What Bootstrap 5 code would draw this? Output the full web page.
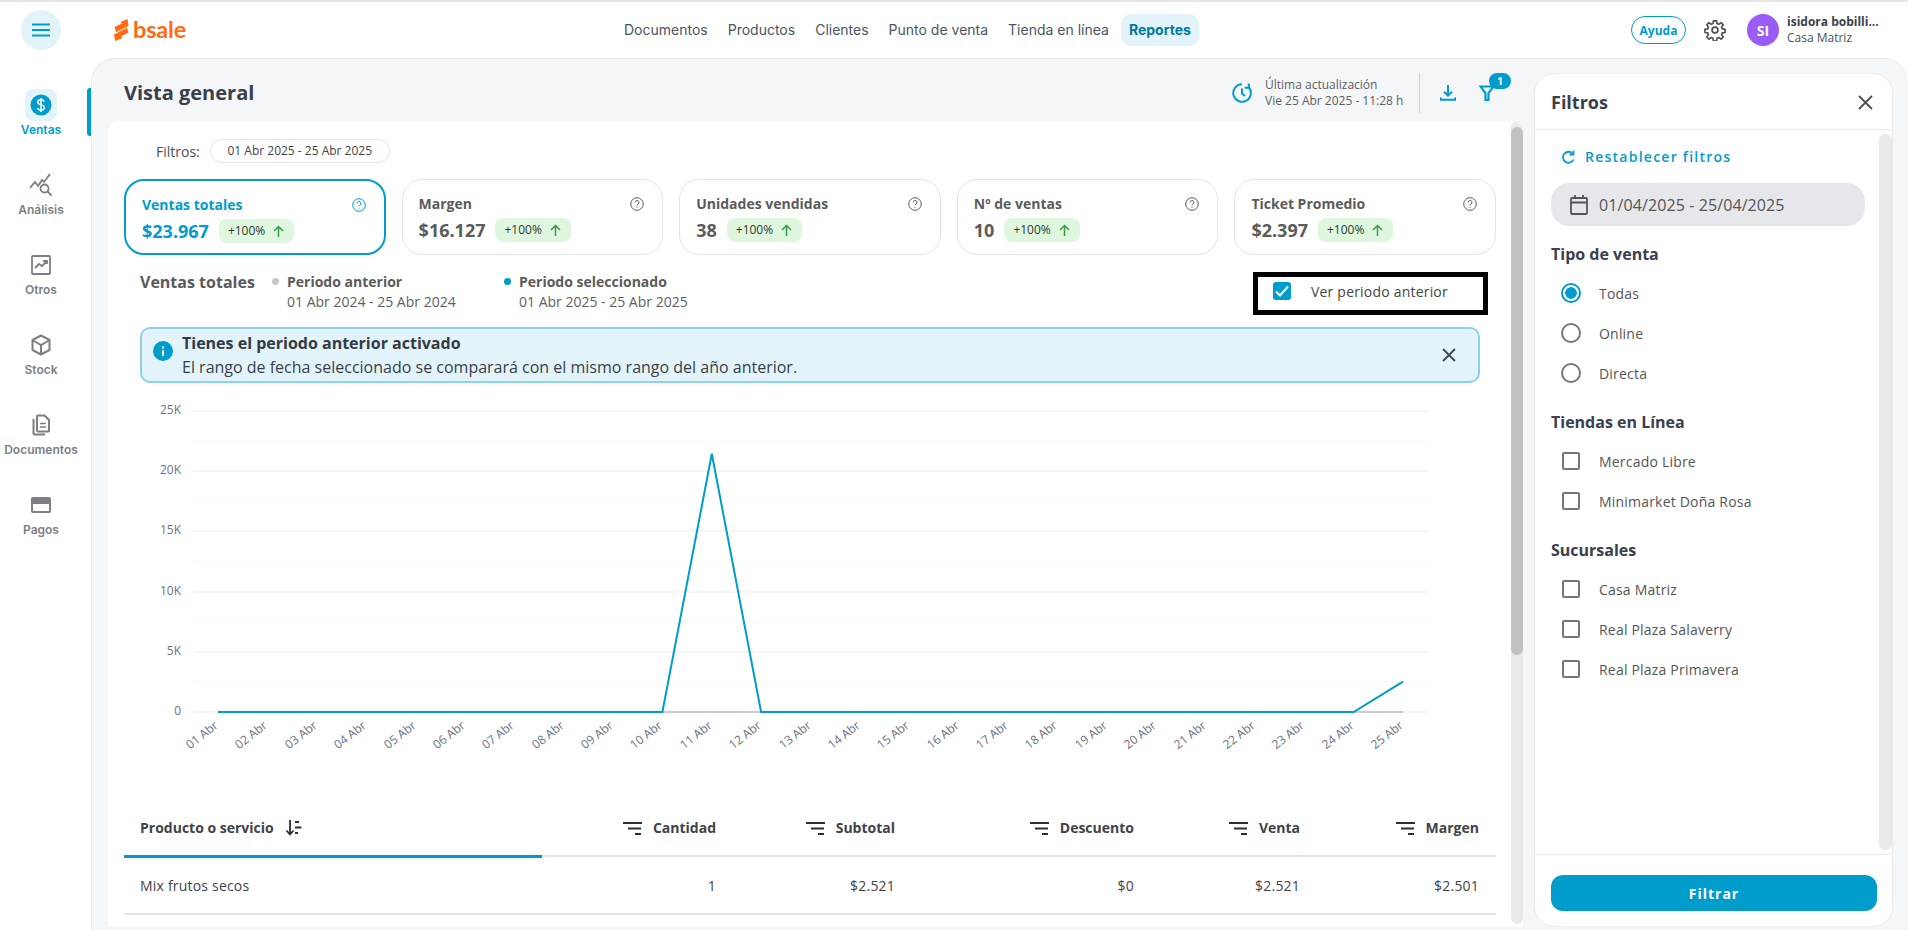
<!doctype html>
<html lang="es">
<head>
<meta charset="utf-8">
<title>Bsale - Vista general</title>
<link href="https://cdn.jsdelivr.net/npm/bootstrap@5.3.0/dist/css/bootstrap.min.css" rel="stylesheet">
<style>
html,body{height:100%;overflow:hidden}
body{font-family:"Open Sans","Liberation Sans",sans-serif;color:#4b4f57;background:#fff;font-size:14px}
.app-shell{height:930px;border-top:2px solid #e6e6e6;display:flex;flex-direction:column}
.top-bar{height:56px;flex:none;display:flex;align-items:center;position:relative}
.burger-wrap{width:91px;flex:none;display:flex;padding-left:21px}
.burger-btn{width:40px;height:40px;border-radius:50%;background:#e3f3fa;border:0;padding:0;display:flex;align-items:center;justify-content:center}
.logo-wrap{width:70px;margin-left:23px;display:flex;align-items:center;gap:4px;color:#ff6a13}
.logo-wrap svg{flex:none}
.logo-word{font-family:Lato,"Liberation Sans",sans-serif;font-weight:700;font-size:23.5px;line-height:1;letter-spacing:-.2px}
.main-nav{margin-left:430px;display:flex;align-items:center}
.main-nav a{font-family:Inter,"Liberation Sans",sans-serif;font-size:14px;color:#4b5563;text-decoration:none;padding:0 10px;line-height:32px}
.main-nav a.current{background:#e3f3fa;color:#00799f;font-weight:700;border-radius:10px;padding:0 8px;margin-left:2px}
.top-right{margin-left:auto;display:flex;align-items:center;padding-right:22px}
.help-pill{font-size:12px;font-weight:700;color:#009ccc;border:1.5px solid #009ccc;border-radius:14px;width:55px;height:28px;padding:0;line-height:25px;background:#fff}
.gear-icon{margin-left:18px}
.avatar-dot{width:32px;height:32px;border-radius:50%;background:#9b5cf6;color:#fff;font-weight:700;font-size:14px;display:flex;align-items:center;justify-content:center;margin-left:21px}
.user-box{margin-left:8px;width:99px;line-height:16px;font-size:12px}
.user-box b{display:block;color:#3a3f4a;font-weight:700;white-space:nowrap}
.work-area{flex:1;display:flex;min-height:0}
.side-rail{width:91px;flex:none;padding:27px 9px 0 0;position:relative}
.rail-item{height:80px;display:flex;flex-direction:column;align-items:center;font-family:Inter,"Liberation Sans",sans-serif;font-weight:600;font-size:12px;color:#7b7f86;text-decoration:none;padding-top:4px}
.rail-ico{width:32px;height:32px;display:flex;align-items:center;justify-content:center;border-radius:8px}
.rail-item.on{color:#009ccc}
.rail-item.on .rail-ico{background:#e3f3fa}
.rail-mark{position:absolute;right:0;top:30px;width:4px;height:48px;background:#009ccc;border-radius:3px 0 0 3px}
.main-panel{flex:1;min-width:0;background:#f5f6f8;border:1px solid #e9eaec;border-right:0;border-bottom:0;border-radius:24px 24px 0 0;display:flex;padding:0 15px 3px 16px;gap:11px}
.left-col{width:1415px;flex:none;display:flex;flex-direction:column;min-height:0}
.title-row{height:62px;flex:none;display:flex;align-items:center;padding:6px 0 0 16px}
.page-title{font-size:20px;font-weight:700;color:#3a3f4a;margin:0}
.update-box{margin-left:auto;display:flex;align-items:center;height:40px}
.update-box svg{flex:none}
.update-text{font-size:12px;line-height:16px;color:#5b5f66;margin-left:13px;width:141px;white-space:nowrap}
.v-rule{width:1px;height:40px;background:#cfd2d6;margin:0 20px 0 13px}
.filter-toggle{position:relative;margin-left:23px;margin-right:28px;display:flex}
.count-pill{position:absolute;top:-12px;left:10px;width:22px;height:16px;background:#009ccc;color:#fff;border-radius:8px;font-size:10px;font-weight:700;padding:0;line-height:16px}
.white-card{flex:1;min-height:0;background:#fff;border-radius:12px 12px 0 0;display:flex;overflow:hidden;position:relative}
.card-body-flow{width:1404px;flex:none;padding:18px 16px 0 16px}
.filter-line{height:24px;display:flex;align-items:center;margin-bottom:16px;padding-left:32px;gap:10px}
.date-chip{border:1px solid #e2e3e5;border-radius:12px;width:180px;height:24px;font-size:12px;line-height:22px;text-align:center;color:#3f434a;background:#fff}
.kpi-row{display:flex;gap:16px;margin-bottom:17px}
.kpi-tile{flex:0 0 calc((100% - 64px) / 5);height:76px;border:1px solid #e2e3e5;border-radius:20px;padding:14px 18px 0 16px;box-shadow:none}
.kpi-tile.sel{border:2px solid #009ccc;color:#009ccc;padding:14px 18px 0 16px}
.kpi-head{display:flex;justify-content:space-between;align-items:center;font-weight:700;font-size:14px;line-height:20px;color:#5b5b5b}
.kpi-tile.sel .kpi-head,.kpi-tile.sel .kpi-val{color:#009ccc}
.kpi-foot{display:flex;align-items:center;gap:10px;margin-top:4px}
.kpi-val{font-size:18px;font-weight:700;color:#5b5b5b;line-height:24px}
.up-tag{background:#dff6df;border-radius:8px;height:24px;font-size:12px;font-weight:400;color:#2e3a30;display:flex;align-items:center;gap:8px;padding:0 10px 0 9px}
.sales-head{display:flex;height:42px;margin-bottom:13px}
.sales-title{font-weight:700;font-size:16px;color:#5b5b5b;line-height:20px;margin-left:16px;width:130px;white-space:nowrap}
.legend-item{display:flex;font-size:14px;line-height:20px;color:#5b5f66}
.legend-item b{display:block;font-weight:700;color:#5b5b5b}
.legend-spot{width:7px;height:7px;border-radius:50%;margin:6px 8px 0 0;flex:none}
.legend-a{width:232px;margin-left:2px}
.prior-box{margin-left:auto;margin-right:8px;width:235px;height:43px;border:5px solid #000;display:flex;align-items:center;padding:0 0 5px 15px;gap:20px;font-size:14px;letter-spacing:.2px;color:#444}
.tick-box{width:18px;height:18px;background:#009ccc;border-radius:3px;display:flex;align-items:center;justify-content:center;flex:none}
.info-strip{height:56px;display:flex;align-items:center;background:#e3f3fa;border:2px solid #8bd3e9;border-radius:10px;padding:0 22px 0 11px;margin:0 16px 0 16px;color:#3a3f4a;gap:9px}
.info-strip .strip-text{flex:1;font-size:16px;line-height:24px}
.info-strip b{display:block;font-weight:700;color:#333a44}
.info-strip svg{flex:none}
.chart-box{height:416px;display:block;margin:0 0 0 -16px}
.chart-box text{font-family:"Open Sans","Liberation Sans",sans-serif;font-size:12px;fill:#6b7280}
.data-grid{width:100%;table-layout:fixed;margin:0;font-size:14px}
.data-grid th{height:57px;font-weight:700;color:#3f434a;vertical-align:bottom;padding:0 17px 17px 16px;border-bottom:2px solid #e2e3e5;text-align:right;white-space:nowrap}
.data-grid th.first{text-align:left;border-bottom:3px solid #009ccc}
.data-grid th svg{vertical-align:-3px}
.data-grid th svg.sort-lines{margin-right:7px}
.data-grid td{height:58px;color:#3f434a;vertical-align:middle;padding:0 17px 0 16px;border-bottom:2px solid #e2e3e5;text-align:right;letter-spacing:.2px}
.data-grid td.first{text-align:left}
.w-a{width:418px}.w-b{width:191px}.w-c{width:179px}.w-d{width:239px}.w-e{width:166px}.w-f{width:179px}
.scroll-track{position:absolute;right:0;top:0;bottom:3px;width:12px;background:#e9eaec;border-radius:6px}
.scroll-thumb{margin-top:6px;height:528px;background:#c1c1c1;border-radius:6px}
.filter-panel{width:359px;flex:none;margin-top:14px;background:#fff;border:1px solid #e9eaec;border-radius:20px;display:flex;flex-direction:column;position:relative;overflow:hidden}
.fp-head{height:56px;flex:none;display:flex;align-items:center;justify-content:space-between;padding:2px 19px 0 16px;border-bottom:1px solid #e9eaec}
.fp-head h2{font-size:18px;font-weight:700;color:#3a3f4a;margin:0}
.fp-body{flex:1;padding:17px 0 0 16px;position:relative}
.reset-link{display:flex;align-items:center;gap:10px;margin-left:11px;font-weight:600;color:#009ccc;letter-spacing:1.25px;font-size:14px;text-decoration:none;line-height:20px}
.date-field{width:314px;height:43px;background:#e5e7eb;border-radius:18px;display:flex;align-items:center;padding-left:19px;gap:11px;color:#555;font-size:16px;letter-spacing:.1px;margin:16px 0 16px}
.fp-group{margin:0 0 17px}
.fp-group h3{font-size:16px;font-weight:700;color:#3a404d;line-height:24px;margin:0 0 7px}
.opt-line{height:40px;display:flex;align-items:center;padding-left:10px;gap:18px;color:#555;font-size:14px;letter-spacing:.2px;margin:0}
.opt-line .form-check-input{margin:0;width:20px;height:20px;flex:none;float:none;border:2px solid #777;background-color:#fff}
.opt-line .form-check-input[type=checkbox]{width:18px;height:18px;border-radius:2px;margin-left:1px;margin-right:1px}
.opt-line .form-check-input[type=radio]:checked{border-color:#009ccc;background-color:#fff;background-image:radial-gradient(circle,#009ccc 0 5.5px,#fff 6px)}
.fp-track{position:absolute;right:0;top:4px;bottom:4px;width:13px;background:#e9eaec;border-radius:6px}
.fp-foot{height:72px;flex:none;border-top:1px solid #e9eaec;padding:20px 16px 0 16px}
.apply-btn{width:326px;height:36px;background:#009ccc;border:0;color:#fff;font-weight:700;font-size:14px;letter-spacing:1px;border-radius:12px;padding:0}
</style>
</head>
<body>
<div class="app-shell">
  <header class="top-bar">
    <div class="burger-wrap"><button class="burger-btn" aria-label="Menú"><svg width="20" height="14" viewBox="0 0 20 14"><path d="M1 1.500h18M1 7h18M1 12.500h18" stroke="#009ccc" stroke-width="2" fill="none"/></svg></button></div>
    <div class="logo-wrap">
      <svg width="15" height="22" viewBox="0 0 15 22"><path d="M13.500 0 14.500 7 2 13.200.6 8 8 4.500 6.300 3Z" fill="#ff6a13"/><path d="M1 22 0 15.500 13 8.800 14.400 13.500 7 17.500 8.800 19Z" fill="#ff6a13"/></svg>
      <span class="logo-word">bsale</span>
    </div>
    <nav class="main-nav">
      <a href="#">Documentos</a><a href="#">Productos</a><a href="#">Clientes</a><a href="#">Punto de venta</a><a href="#">Tienda en línea</a><a href="#" class="current">Reportes</a>
    </nav>
    <div class="top-right">
      <button class="btn help-pill">Ayuda</button>
      <svg class="gear-icon" width="22" height="22" viewBox="0 0 24 24" fill="none" stroke="#4b4f57" stroke-width="1.800"><circle cx="12" cy="12" r="3.200"/><path d="M10.300 2h3.400l.5 3 1.900.8 2.500-1.800 2.400 2.400-1.800 2.500.8 1.900 3 .5v3.400l-3 .5-.8 1.900 1.800 2.500-2.400 2.400-2.500-1.800-1.900.8-.5 3h-3.400l-.5-3-1.900-.8-2.500 1.800-2.400-2.400 1.800-2.500-.8-1.900-3-.5v-3.400l3-.5.8-1.900-1.800-2.500 2.400-2.400 2.500 1.800 1.900-.8Z" stroke-linejoin="round"/></svg>
      <div class="avatar-dot">SI</div>
      <div class="user-box"><b>isidora bobilli...</b>Casa Matriz</div>
    </div>
  </header>
  <div class="work-area">
    <aside class="side-rail">
      <span class="rail-mark"></span>
      <a class="rail-item on" href="#"><span class="rail-ico"><svg width="22" height="22" viewBox="0 0 22 22"><circle cx="11" cy="11" r="10.500" fill="#009ccc"/><path d="M14.300 7.600c-.5-1.200-1.700-1.800-3.300-1.800-1.800 0-3.200.9-3.200 2.500 0 3.400 6.600 1.800 6.600 5.200 0 1.600-1.500 2.600-3.400 2.600-1.700 0-3-.8-3.500-2.100M11 4v14" stroke="#fff" stroke-width="1.500" fill="none"/></svg></span>Ventas</a>
      <a class="rail-item" href="#"><span class="rail-ico"><svg width="24" height="24" viewBox="0 0 24 24" fill="none" stroke="#7b7f86" stroke-width="1.800"><path d="M1 15 6 9l3 4 4-6 2 2 6-8"/><circle cx="15.500" cy="15.500" r="4"/><path d="m18.500 18.500 4 4"/></svg></span>Análisis</a>
      <a class="rail-item" href="#"><span class="rail-ico"><svg width="20" height="20" viewBox="0 0 20 20" fill="none" stroke="#7b7f86" stroke-width="1.800"><rect x="1" y="1" width="18" height="18" rx="1"/><path d="m4 13 4-4 3 2 5-5M12 6h4v3"/></svg></span>Otros</a>
      <a class="rail-item" href="#"><span class="rail-ico"><svg width="20" height="22" viewBox="0 0 20 22" fill="none" stroke="#7b7f86" stroke-width="2"><path d="M10 1.500 18.500 6v10L10 20.500 1.500 16V6Z" stroke-linejoin="round"/><path d="M2 6.500 10 11l8-4.500M10 11v9"/></svg></span>Stock</a>
      <a class="rail-item" href="#"><span class="rail-ico"><svg width="18" height="22" viewBox="0 0 18 22" fill="none" stroke="#7b7f86" stroke-width="2"><path d="M1.500 5v14.500a1 1 0 0 0 1 1H13"/><path d="M5 2.500a1 1 0 0 1 1-1h6.500L17 6v10.500a1 1 0 0 1-1 1H6a1 1 0 0 1-1-1Z"/><path d="M8 9.500h6M8 13h6" stroke-width="1.500"/></svg></span>Documentos</a>
      <a class="rail-item" href="#"><span class="rail-ico"><svg width="20" height="16" viewBox="0 0 20 16"><path fill="#7b7f86" d="M2 0h16a2 2 0 0 1 2 2v12a2 2 0 0 1-2 2H2a2 2 0 0 1-2-2V2a2 2 0 0 1 2-2Zm0 7v7h16V7Z"/></svg></span>Pagos</a>
    </aside>
    <main class="main-panel">
      <section class="left-col">
        <div class="title-row">
          <h1 class="page-title">Vista general</h1>
          <div class="update-box">
            <svg width="20" height="20" viewBox="0 0 20 20" fill="none" stroke="#009ccc" stroke-width="2"><path d="M16 3.500A8.800 8.800 0 1 1 10 1.200"/><path d="M16.800.5v4.200h-4.200"/><path d="M10 5.500v5l3 2.500"/></svg>
            <div class="update-text">Última actualización<br>Vie 25 Abr 2025 - 11:28 h</div>
            <span class="v-rule"></span>
            <svg width="16" height="16" viewBox="0 0 16 16" fill="none" stroke="#009ccc" stroke-width="2"><path d="M8 0v10.500M4 6.700l4 4 4-4M1 12.500v2.300h14v-2.300"/></svg>
            <span class="filter-toggle"><svg width="16" height="16" viewBox="0 0 16 16" fill="none" stroke="#009ccc" stroke-width="2.200"><path d="M1.500 1.500h13L9.500 8v7h-3V8Z"/></svg><span class="badge count-pill">1</span></span>
          </div>
        </div>
        <div class="white-card">
          <div class="card-body-flow">
            <div class="filter-line"><span>Filtros:</span><span class="date-chip">01 Abr 2025 - 25 Abr 2025</span></div>
            <div class="kpi-row">
              <div class="card kpi-tile sel"><div class="kpi-head"><span>Ventas totales</span><svg width="14" height="14" viewBox="0 0 14 14" fill="none" stroke="currentColor"><circle cx="7" cy="7" r="6.300"/><path d="M5.200 5.400a1.900 1.900 0 1 1 2.700 1.700c-.6.300-.9.600-.9 1.300M7 9.700v1"/></svg></div><div class="kpi-foot"><span class="kpi-val">$23.967</span><span class="up-tag">+100%<svg width="11" height="12" viewBox="0 0 11 12" fill="none" stroke="#3a9a48" stroke-width="1.500"><path d="M5.500 12V1.500M1 6l4.500-4.500L10 6"/></svg></span></div></div>
              <div class="card kpi-tile"><div class="kpi-head"><span>Margen</span><svg width="14" height="14" viewBox="0 0 14 14" fill="none" stroke="currentColor"><circle cx="7" cy="7" r="6.300"/><path d="M5.200 5.400a1.900 1.900 0 1 1 2.700 1.700c-.6.300-.9.600-.9 1.300M7 9.700v1"/></svg></div><div class="kpi-foot"><span class="kpi-val">$16.127</span><span class="up-tag">+100%<svg width="11" height="12" viewBox="0 0 11 12" fill="none" stroke="#3a9a48" stroke-width="1.500"><path d="M5.500 12V1.500M1 6l4.500-4.500L10 6"/></svg></span></div></div>
              <div class="card kpi-tile"><div class="kpi-head"><span>Unidades vendidas</span><svg width="14" height="14" viewBox="0 0 14 14" fill="none" stroke="currentColor"><circle cx="7" cy="7" r="6.300"/><path d="M5.200 5.400a1.900 1.900 0 1 1 2.700 1.700c-.6.300-.9.600-.9 1.300M7 9.700v1"/></svg></div><div class="kpi-foot"><span class="kpi-val">38</span><span class="up-tag">+100%<svg width="11" height="12" viewBox="0 0 11 12" fill="none" stroke="#3a9a48" stroke-width="1.500"><path d="M5.500 12V1.500M1 6l4.500-4.500L10 6"/></svg></span></div></div>
              <div class="card kpi-tile"><div class="kpi-head"><span>Nº de ventas</span><svg width="14" height="14" viewBox="0 0 14 14" fill="none" stroke="currentColor"><circle cx="7" cy="7" r="6.300"/><path d="M5.200 5.400a1.900 1.900 0 1 1 2.700 1.700c-.6.300-.9.600-.9 1.300M7 9.700v1"/></svg></div><div class="kpi-foot"><span class="kpi-val">10</span><span class="up-tag">+100%<svg width="11" height="12" viewBox="0 0 11 12" fill="none" stroke="#3a9a48" stroke-width="1.500"><path d="M5.500 12V1.500M1 6l4.500-4.500L10 6"/></svg></span></div></div>
              <div class="card kpi-tile"><div class="kpi-head"><span>Ticket Promedio</span><svg width="14" height="14" viewBox="0 0 14 14" fill="none" stroke="currentColor"><circle cx="7" cy="7" r="6.300"/><path d="M5.200 5.400a1.900 1.900 0 1 1 2.700 1.700c-.6.300-.9.600-.9 1.300M7 9.700v1"/></svg></div><div class="kpi-foot"><span class="kpi-val">$2.397</span><span class="up-tag">+100%<svg width="11" height="12" viewBox="0 0 11 12" fill="none" stroke="#3a9a48" stroke-width="1.500"><path d="M5.500 12V1.500M1 6l4.500-4.500L10 6"/></svg></span></div></div>
            </div>
            <div class="sales-head">
              <div class="sales-title">Ventas totales</div>
              <div class="legend-item legend-a"><span class="legend-spot" style="background:#c9c5d0"></span><div><b>Periodo anterior</b>01 Abr 2024 - 25 Abr 2024</div></div>
              <div class="legend-item"><span class="legend-spot" style="background:#009ccc"></span><div><b>Periodo seleccionado</b>01 Abr 2025 - 25 Abr 2025</div></div>
              <label class="prior-box"><span class="tick-box"><svg width="14" height="12" viewBox="0 0 14 12" fill="none" stroke="#fff" stroke-width="2"><path d="M1 6.500 5 10.500 13 1.500"/></svg></span>Ver periodo anterior</label>
            </div>
            <div class="alert info-strip" role="alert">
              <svg width="20" height="20" viewBox="0 0 20 20" class="mb-2"><circle cx="10" cy="10" r="10" fill="#009ccc"/><rect x="9" y="9" width="2" height="6" fill="#fff"/><rect x="9" y="5.500" width="2" height="2" fill="#fff"/></svg>
              <div class="strip-text"><b>Tienes el periodo anterior activado</b>El rango de fecha seleccionado se comparará con el mismo rango del año anterior.</div>
              <svg width="14" height="14" viewBox="0 0 14 14" stroke="#3f434a" stroke-width="1.800" fill="none"><path d="M1 1l12 12M13 1 1 13"/></svg>
            </div>
            <svg class="chart-box" id="salesChart" width="1388" height="416" viewBox="108 383 1388 416"></svg>
            <table class="table data-grid">
              <colgroup><col class="w-a"><col class="w-b"><col class="w-c"><col class="w-d"><col class="w-e"><col class="w-f"></colgroup>
              <thead><tr>
                <th class="first">Producto o servicio <svg class="ms-2" width="18" height="16" viewBox="0 0 18 16" fill="none" stroke="#2b2d33" stroke-width="1.800"><path d="M5 0v14M1.500 10.500 5 14.500l3.500-4M10 2h4M10 7.500h6.500M10 13h3"/></svg></th>
                <th><svg class="sort-lines" width="19" height="14" viewBox="0 0 19 14" fill="none" stroke="#2b2d33" stroke-width="2"><path d="M0 1h19M5 6.500h13M12 12h6"/></svg> Cantidad</th>
                <th><svg class="sort-lines" width="19" height="14" viewBox="0 0 19 14" fill="none" stroke="#2b2d33" stroke-width="2"><path d="M0 1h19M5 6.500h13M12 12h6"/></svg> Subtotal</th>
                <th><svg class="sort-lines" width="19" height="14" viewBox="0 0 19 14" fill="none" stroke="#2b2d33" stroke-width="2"><path d="M0 1h19M5 6.500h13M12 12h6"/></svg> Descuento</th>
                <th><svg class="sort-lines" width="19" height="14" viewBox="0 0 19 14" fill="none" stroke="#2b2d33" stroke-width="2"><path d="M0 1h19M5 6.500h13M12 12h6"/></svg> Venta</th>
                <th><svg class="sort-lines" width="19" height="14" viewBox="0 0 19 14" fill="none" stroke="#2b2d33" stroke-width="2"><path d="M0 1h19M5 6.500h13M12 12h6"/></svg> Margen</th>
              </tr></thead>
              <tbody><tr><td class="first">Mix frutos secos</td><td>1</td><td>$2.521</td><td>$0</td><td>$2.521</td><td>$2.501</td></tr></tbody>
            </table>
          </div>
          <div class="scroll-track"><div class="scroll-thumb"></div></div>
        </div>
      </section>
      <aside class="filter-panel">
        <div class="fp-head"><h2>Filtros</h2><svg width="15" height="15" viewBox="0 0 15 15" stroke="#4b4f57" stroke-width="1.800" fill="none"><path d="M1 1l13 13M14 1 1 14"/></svg></div>
        <div class="fp-body">
          <div class="fp-track"></div>
          <a class="reset-link" href="#"><svg width="13" height="14" viewBox="0 0 13 14" fill="none" stroke="#009ccc" stroke-width="1.800"><path d="M11.500 9.500A5.500 5.500 0 1 1 10.500 3.500"/><path d="M11.500 0.500V4.500H7.500"/></svg>Restablecer filtros</a>
          <div class="date-field"><svg width="18" height="20" viewBox="0 0 18 20" fill="none" stroke="#555" stroke-width="1.800"><rect x="1" y="3" width="16" height="16" rx="1"/><path d="M1 7.500h16M5 0v4M13 0v4"/></svg>01/04/2025 - 25/04/2025</div>
          <div class="fp-group"><h3>Tipo de venta</h3>
            <label class="opt-line"><input class="form-check-input" type="radio" name="tv" checked>Todas</label>
            <label class="opt-line"><input class="form-check-input" type="radio" name="tv">Online</label>
            <label class="opt-line"><input class="form-check-input" type="radio" name="tv">Directa</label>
          </div>
          <div class="fp-group"><h3>Tiendas en Línea</h3>
            <label class="opt-line"><input class="form-check-input" type="checkbox">Mercado Libre</label>
            <label class="opt-line"><input class="form-check-input" type="checkbox">Minimarket Doña Rosa</label>
          </div>
          <div class="fp-group"><h3>Sucursales</h3>
            <label class="opt-line"><input class="form-check-input" type="checkbox">Casa Matriz</label>
            <label class="opt-line"><input class="form-check-input" type="checkbox">Real Plaza Salaverry</label>
            <label class="opt-line"><input class="form-check-input" type="checkbox">Real Plaza Primavera</label>
          </div>
        </div>
        <div class="fp-foot"><button class="btn apply-btn">Filtrar</button></div>
      </aside>
    </main>
  </div>
</div>
<script>
(function(){
  var ns='http://www.w3.org/2000/svg',s=document.getElementById('salesChart');
  function el(n,a,t){var e=document.createElementNS(ns,n);for(var k in a)e.setAttribute(k,a[k]);if(t)e.textContent=t;s.appendChild(e);}
  var y0=712,step=60.2,x0=218,dx=(1403-218)/24;
  ['0','5K','10K','15K','20K','25K'].forEach(function(l,i){
    var y=Math.round(y0-i*step);
    el('line',{x1:193,x2:1428,y1:y,y2:y,stroke:'#f1f2f3','stroke-width':1.5});
    if(i<5)el('line',{x1:193,x2:1428,y1:Math.round(y-step/2),y2:Math.round(y-step/2),stroke:'#fafafb','stroke-width':1});
    el('text',{x:181,y:y+3,'text-anchor':'end'},l);
  });
  el('line',{x1:x0,x2:1403,y1:y0,y2:y0,stroke:'#cfc9d4','stroke-width':2});
  var vals=[];for(var i=0;i<25;i++)vals.push(0);vals[10]=21446;vals[24]=2521;
  var pts=vals.map(function(v,i){return (x0+i*dx).toFixed(1)+','+(y0-v/25000*301).toFixed(1);}).join(' ');
  el('polyline',{points:pts,fill:'none',stroke:'#009ccc','stroke-width':2});
  for(var d=1;d<=25;d++){var x=Math.round(x0+(d-1)*dx+1),ty=727;
    el('text',{x:x,y:ty,'text-anchor':'end',transform:'rotate(-38 '+x+' '+ty+')'},(d<10?'0':'')+d+' Abr');}
})();
</script>
</body>
</html>
